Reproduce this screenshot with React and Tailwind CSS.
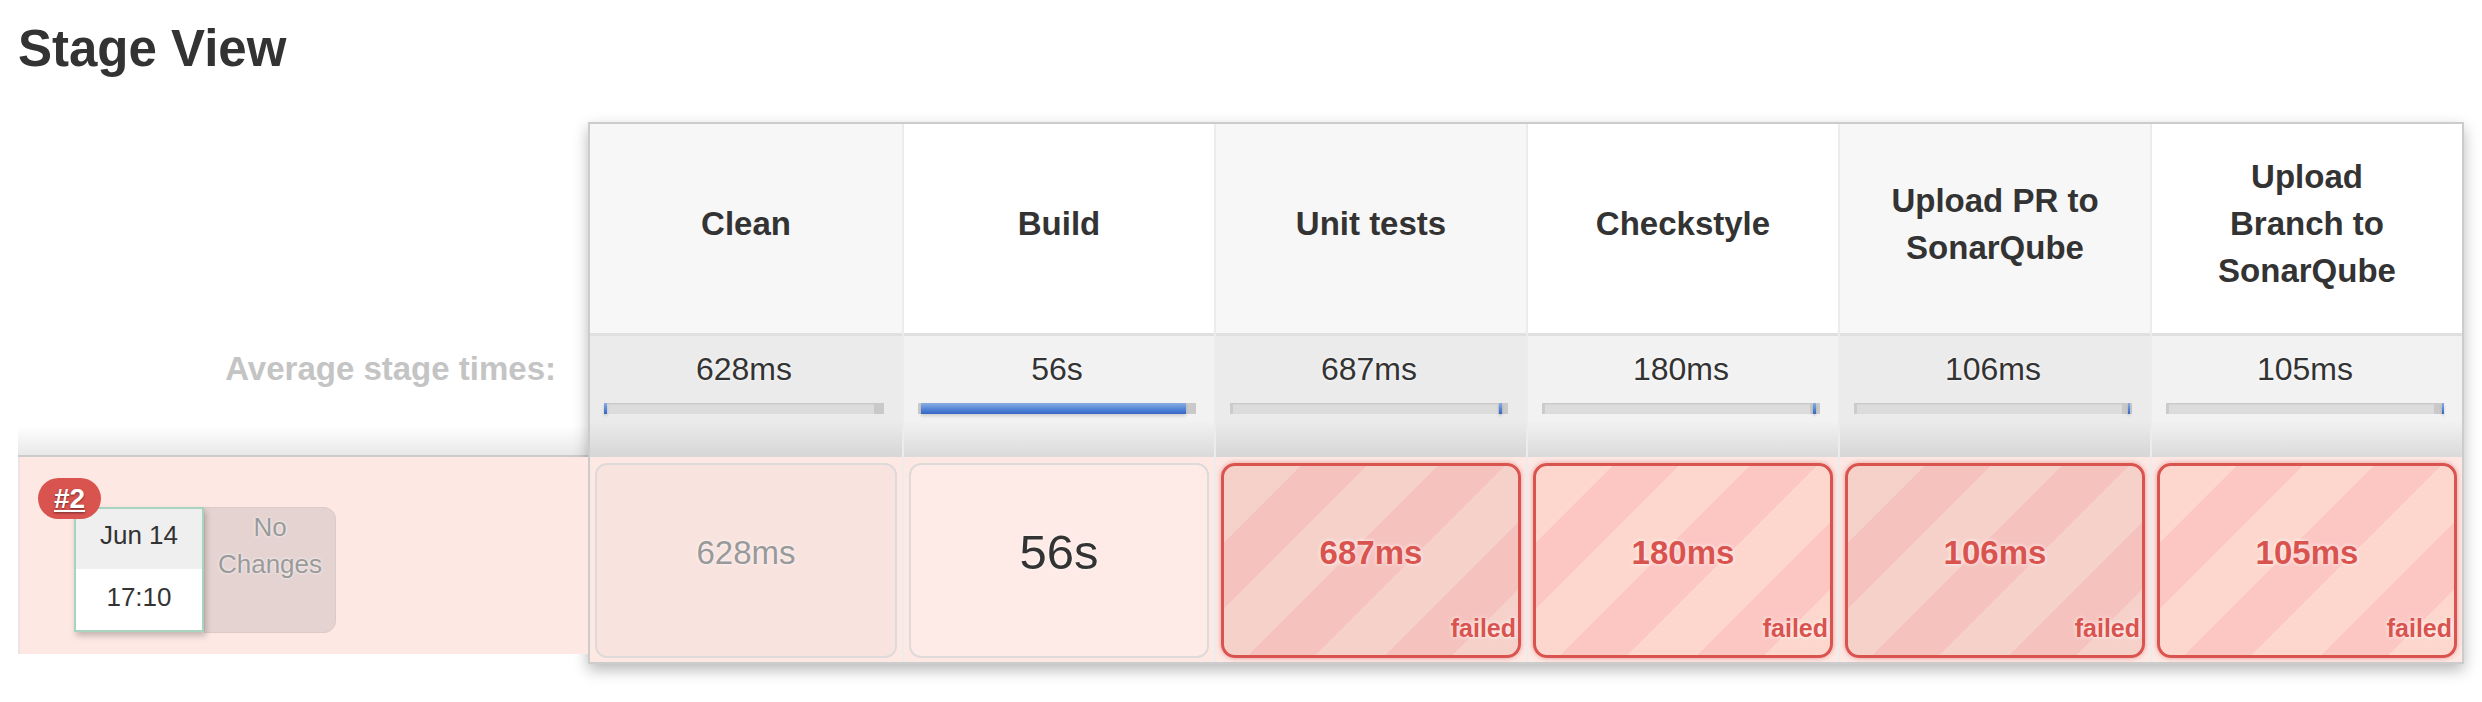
import React from 'react';

const stages = [
  { name: 'Clean', avg: '628ms', bar: [0, 1.1], time: '628ms', status: 'skipped' },
  { name: 'Build', avg: '56s', bar: [1.1, 95.3], time: '56s', status: 'success' },
  { name: 'Unit tests', avg: '687ms', bar: [96.6, 1.2], time: '687ms', status: 'failed' },
  { name: 'Checkstyle', avg: '180ms', bar: [97.6, 1], time: '180ms', status: 'failed' },
  { name: 'Upload PR to SonarQube', avg: '106ms', bar: [98.4, 1], time: '106ms', status: 'failed' },
  { name: 'Upload Branch to SonarQube', avg: '105ms', bar: [99.2, 0.8], time: '105ms', status: 'failed' },
];

function AvgBar({ bar }) {
  return (
    <div className="relative h-[11px] bg-[#dcdcdc] shadow-[inset_0_1px_2px_rgba(0,0,0,0.12)]">
      <div className="absolute left-0 top-0 h-full w-[3px] bg-[#cbcbcb]" />
      <div className="absolute right-0 top-0 h-full w-[10px] bg-[#c9c9c9]" />
      <div
        className="absolute top-0 h-full bg-[linear-gradient(#8aaee2,#4f82d6_60%,#3667c6)] shadow-[0_2px_3px_rgba(0,0,0,0.15)]"
        style={{ left: `${bar[0]}%`, width: `${bar[1]}%` }}
      />
    </div>
  );
}

function RunCell({ stage, odd }) {
  if (stage.status === 'skipped') {
    return (
      <div className="h-full pb-[16px] rounded-[12px] border-2 border-[#dedada] bg-[#f8e3df] flex items-center justify-center text-[33px] text-[#999] [text-shadow:0_0_3px_#fff]">
        {stage.time}
      </div>
    );
  }
  if (stage.status === 'success') {
    return (
      <div className="h-full pb-[16px] rounded-[12px] border-2 border-[#dedada] bg-[#feeae6] flex items-center justify-center text-[49px] text-[#333] [text-shadow:0_0_3px_#fff]">
        {stage.time}
      </div>
    );
  }
  return (
    <div
      className={`relative h-full pb-[16px] rounded-[14px] border-[3px] border-[#d9534f] shadow-[0_0_5px_rgba(217,83,79,0.55)] flex items-center justify-center ${
        odd
          ? 'bg-[image:repeating-linear-gradient(135deg,#fcc6c3_0_4px,#fdd7cd_4px_54px,#fcc6c3_54px_97px)]'
          : 'bg-[image:repeating-linear-gradient(135deg,#f6c2be_0_4px,#f6d1ca_4px_54px,#f6c2be_54px_97px)]'
      }`}
    >
      <span className="text-[33px] font-bold text-[#d9534f] [text-shadow:0_0_4px_#fff]">{stage.time}</span>
      <span className="absolute right-[2px] bottom-[14px] text-[25px] leading-none font-bold text-[#d9534f] [text-shadow:0_0_4px_#fff]">
        failed
      </span>
    </div>
  );
}

function StageColumn({ stage, index }) {
  const odd = index % 2 === 1;
  return (
    <div className={`w-[312px] shrink-0 flex flex-col ${index > 0 ? 'border-l-2 border-[#ececec]' : ''}`}>
      <div
        className={`h-[209px] pb-[10px] flex items-center justify-center px-[44px] text-center font-bold text-[33px] leading-[47px] text-[#333] ${
          odd ? 'bg-white' : 'bg-[#f7f7f7]'
        }`}
      >
        {stage.name}
      </div>
      <div
        className={`h-[124px] border-t-[3px] border-[#e0e0e0] pt-[13px] pl-[14px] pr-[18px] ${
          odd ? 'bg-[linear-gradient(#f2f2f2_70%,#dadada)]' : 'bg-[linear-gradient(#ebebeb_70%,#d6d6d6)]'
        }`}
      >
        <div className="text-center text-[32px] leading-[40px] text-[#333] [text-shadow:0_0_3px_#fff]">{stage.avg}</div>
        <div className="mt-[14px]">
          <AvgBar bar={stage.bar} />
        </div>
      </div>
      <div className="h-[205px] bg-[#fde8e4] pt-[6px] pb-[4px] px-[5px]">
        <RunCell stage={stage} odd={odd} />
      </div>
    </div>
  );
}

export default function App() {
  return (
    <div className="min-h-[702px] bg-white pt-[23px] pl-[18px] font-['Liberation_Sans',Arial,Helvetica,sans-serif]">
      <h2 className="text-[51px] leading-none font-bold text-[#333]">Stage View</h2>

      <div className="mt-[48px] flex items-start">
        <div className="w-[570px] shrink-0">
          <div className="h-[211px]" />
          <div className="h-[124px] flex justify-end pt-[16px] pr-[32px] border-b-2 border-b-[#cccccc] bg-[linear-gradient(#ffffff_76%,#e8e8e8)]">
            <span className="text-[33px] leading-[40px] font-bold text-[#c4c4c4]">Average stage times:</span>
          </div>
          <div className="relative h-[197px] bg-[#fde8e4] border-l-2 border-[#ece4e2] pl-[54px] pt-[50px] flex items-start">
            <div className="relative z-10 w-[130px] h-[125px] border-2 border-[#a8d4bf] bg-white shadow-[2px_4px_6px_rgba(0,0,0,0.22)] flex flex-col">
              <div className="h-[60px] pb-[8px] bg-[#efefef] flex items-center justify-center text-[26px] text-[#333]">Jun 14</div>
              <div className="flex-1 pb-[4px] flex items-center justify-center text-[26px] text-[#333]">17:10</div>
            </div>
            <div className="w-[132px] h-[126px] rounded-r-[12px] bg-[#e4d3d1] border border-[#dccac8] pt-[1px] text-center text-[26px] leading-[37px] text-[#9a9a9a] [text-shadow:0_0_3px_#fff]">
              No
              <br />
              Changes
            </div>
            <a className="absolute z-20 left-[18px] top-[21px] w-[63px] h-[41px] rounded-full bg-[#d9534f] flex items-center justify-center text-[28px] font-bold text-white underline [text-shadow:0_1px_2px_rgba(0,0,0,0.5)]">
              #2
            </a>
          </div>
        </div>

        <div className="flex border-2 border-[#cccccc] shadow-[0_6px_14px_rgba(0,0,0,0.28)]">
          {stages.map((s, i) => (
            <StageColumn key={s.name} stage={s} index={i} />
          ))}
        </div>
      </div>
    </div>
  );
}
